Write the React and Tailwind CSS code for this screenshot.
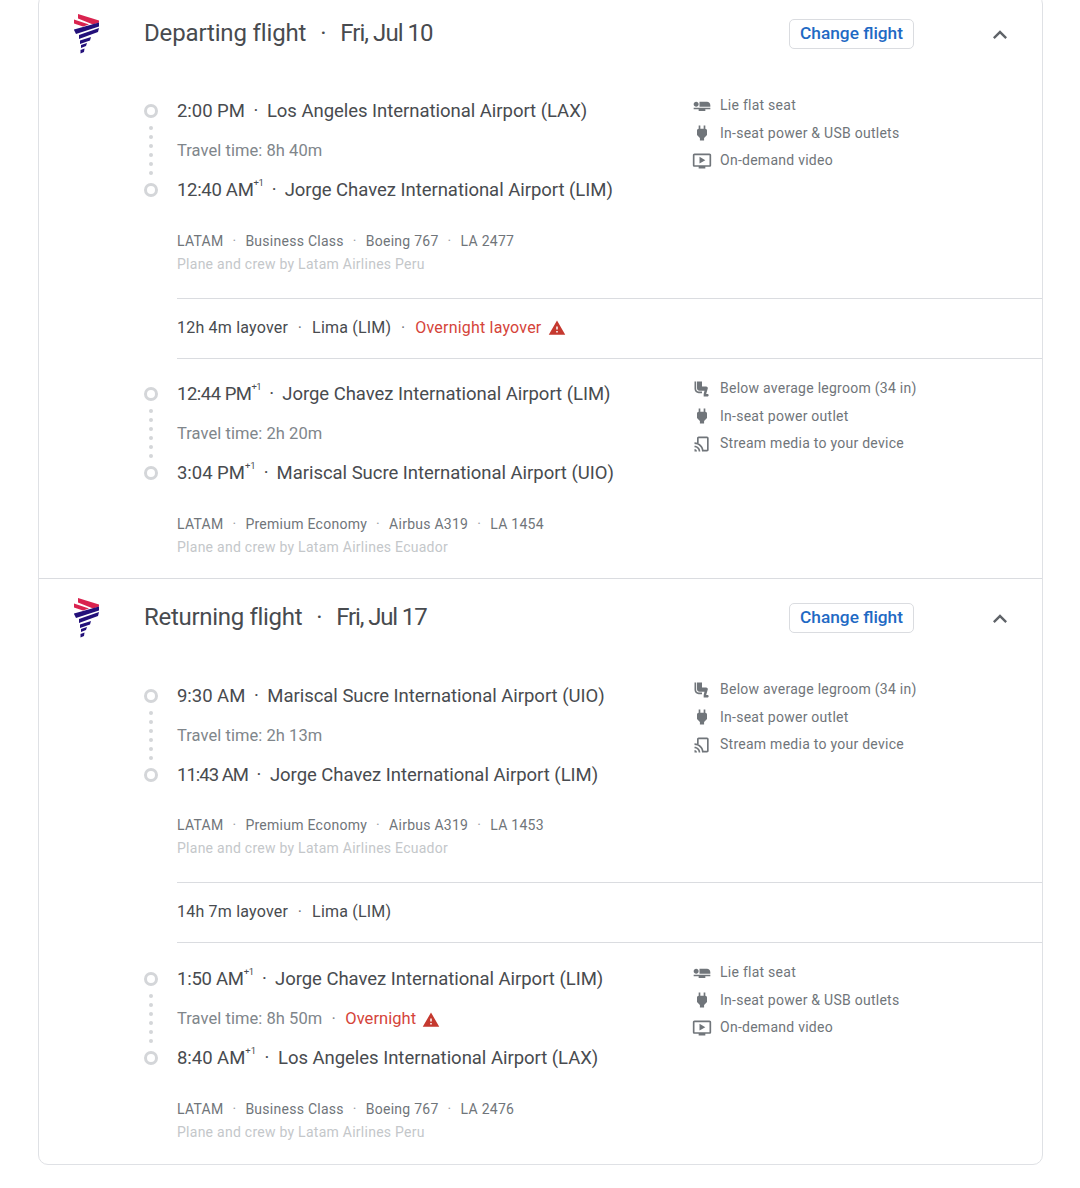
const P = {
  flat: "M22 11v2H9V7h9c2.21 0 4 1.79 4 4zM2 14v2h6v2h8v-2h6v-2H2zm5.14-1.9c1.16-1.19 1.14-3.08-.04-4.24-1.19-1.16-3.08-1.14-4.24.04-1.16 1.19-1.14 3.08.04 4.24 1.19 1.16 3.08 1.14 4.24-.04z",
  power: "M16.01 7L16 3h-2v4h-4V3H8v4h-.01C7 6.99 6 7.99 6 8.99v5.49L9.5 18v3h5v-3l3.5-3.51v-5.5c0-1-1-2-1.99-1.99z",
  video: "M21 3H3c-1.11 0-2 .89-2 2v12c0 1.1.89 2 2 2h5v2h8v-2h5c1.1 0 2-.9 2-2l.01-12c0-1.11-.9-2-2.01-2zm0 14H3V5h18v12zM16 11l-7 4V7z",
  leg: "M19.97 19.2c.18.96-.55 1.8-1.47 1.8H14v-3l1-4H9c-1.65 0-3-1.35-3-3V3h6v6h5c1.1 0 2 .9 2 2l-2 7h1.44c.73 0 1.39.49 1.53 1.2zM5 12V3H3v9c0 2.76 2.24 5 5 5h4v-2H8c-1.66 0-3-1.34-3-3z",
  cast: "M18 3H8c-1.1 0-2 .9-2 2v7h2V5h10v14h-5v2h5c1.1 0 2-.9 2-2V5c0-1.1-.9-2-2-2zM3 18v3h3c0-1.66-1.34-3-3-3zm0-4v2c2.76 0 5 2.24 5 5h2c0-3.87-3.13-7-7-7zm0-4v2c4.97 0 9 4.03 9 9h2c0-6.08-4.93-11-11-11z",
  warn: "M1 21h22L12 2 1 21zm12-3h-2v-2h2v2zm0-4h-2v-4h2v4z",
  up: "M7.41 15.41L12 10.83l4.59 4.58L18 14l-6-6-6 6z",
};

function Ic({ d, className }) {
  return (
    <svg viewBox="0 0 24 24" className={className} fill="currentColor">
      <path d={d} />
    </svg>
  );
}

function Logo() {
  return (
    <svg viewBox="0 0 26 40" className="w-[26px] h-[40px] shrink-0">
      <g fill="#d9234f">
        <polygon points="4,0 25,6.5 25,8.5 19,10.5 4,4.5" />
        <polygon points="0,5.5 15,10.5 9,12.5 0,9.5" />
      </g>
      <g fill="#23107a">
        <polygon points="25,8.5 25,12.5 2,20 0,16 0,15.5" />
        <polygon points="25,14 24,18 5,25 5,21" />
        <polygon points="17,23 16,26.5 6,30 6,26.5" />
        <polygon points="13,29 12,32 7,34 7,31" />
        <polygon points="10.5,34.5 10,38 6.5,39.5 6.5,36" />
      </g>
    </svg>
  );
}

function Rail() {
  return (
    <div className="w-[14px] mr-[19px] pt-[12px] flex flex-col items-center shrink-0">
      <div className="w-[14px] h-[14px] rounded-full border-[3px] border-[#d4d6d9]" />
      <div className="flex flex-col items-center gap-[5.2px] py-[7.5px]">
        {[0, 1, 2, 3, 4, 5].map((i) => (
          <div key={i} className="w-[4px] h-[4px] rounded-full bg-[#d4d6d9]" />
        ))}
      </div>
      <div className="w-[14px] h-[14px] rounded-full border-[3px] border-[#d4d6d9]" />
    </div>
  );
}

function Time({ time, plus, airport, sep = 22, timeClass = "" }) {
  return (
    <div className="h-10 flex items-center text-[18.5px] text-[#484b4f] tracking-[-0.03px] whitespace-nowrap">
      <span className={timeClass}>
        {time}
        {plus && <sup className="text-[9.5px] align-[5px] leading-none">+1</sup>}
      </span>
      <span className="text-center" style={{ width: sep }}>·</span>
      <span>{airport}</span>
    </div>
  );
}

function Amenity({ icon, text }) {
  return (
    <div className="flex items-center h-[27.5px]">
      <div className="w-[28px] -ml-[2px] flex items-center justify-start">
        <Ic d={icon} className="w-[20px] h-[20px] text-[#70757a]" />
      </div>
      <span>{text}</span>
    </div>
  );
}

function Segment({ a, b, travel, overnight, details, crew, amen, className, detailClass, amenClass = "" }) {
  return (
    <div className={`flex pl-[105px] ${className}`}>
      <Rail />
      <div className="w-[517px] shrink-0">
        <Time {...a} />
        <div className="h-[39px] flex items-center text-[16.5px] text-[#80868b] tracking-[0.05px]">
          <span>Travel time: {travel}</span>
          {overnight && (
            <span className="flex items-center text-[#d5443a]">
              <span className="text-[#80868b] w-[23px] text-center">·</span>
              <span>Overnight</span>
              <Ic d={P.warn} className="w-[18px] h-[18px] ml-[6px] text-[#c5392f]" />
            </span>
          )}
        </div>
        <Time {...b} />
        <div className={`h-[23px] flex items-center text-[14px] text-[#70757a] tracking-[0.26px] whitespace-nowrap ${detailClass}`}>
          {details.map((d, i) => (
            <span key={i} className="flex items-center">
              {i > 0 && <span className="w-[22px] text-center text-[#9aa0a6]">·</span>}
              {d}
            </span>
          ))}
        </div>
        <div className="h-[23px] flex items-center text-[14px] text-[#c4c7ca] tracking-[0.26px]">{crew}</div>
      </div>
      <div className={`text-[14px] text-[#70757a] tracking-[0.26px] whitespace-nowrap ${amenClass}`}>
        {amen.map((m, i) => (
          <Amenity key={i} {...m} />
        ))}
      </div>
    </div>
  );
}

function Layover({ children }) {
  return (
    <div className="ml-[138px] border-y border-[#dadce0] h-[61px] pb-[2px] flex items-center text-[16px] text-[#484b4f] tracking-[0.2px] whitespace-nowrap">
      {children}
    </div>
  );
}

function Sep() {
  return <span className="w-[24px] text-center text-[#70757a]">·</span>;
}

function Header({ title, date, titleClass, dateClass, className }) {
  return (
    <div className={`flex items-center ${className}`}>
      <div className="w-[35px] ml-[35px] self-start mt-[19px]">
        <Logo />
      </div>
      <div className="ml-[35px] text-[24px] text-[#484b4f] flex whitespace-nowrap">
        <span className={titleClass}>{title}</span>
        <span className="w-[34px] text-center">·</span>
        <span className={dateClass}>{date}</span>
      </div>
      <div className="ml-auto flex items-center">
        <button className="h-[30px] w-[125px] mt-[2px] rounded-[5px] border border-[#dadce0] text-[#1f6ac4] text-[17.3px] font-medium">
          Change flight
        </button>
        <div className="ml-[72px] mr-[28px] mt-[4px]">
          <Ic d={P.up} className="w-[28px] h-[28px] text-[#5f6368]" />
        </div>
      </div>
    </div>
  );
}

const business = [
  { icon: P.flat, text: "Lie flat seat" },
  { icon: P.power, text: "In-seat power & USB outlets" },
  { icon: P.video, text: "On-demand video" },
];
const premium = [
  { icon: P.leg, text: "Below average legroom (34 in)" },
  { icon: P.power, text: "In-seat power outlet" },
  { icon: P.cast, text: "Stream media to your device" },
];

export default function App() {
  return (
    <div className="bg-white h-[1188px] overflow-hidden" style={{ fontFamily: "Roboto, sans-serif" }}>
      <div className="mx-[38px] w-[1005px] -mt-[6px] border border-[#dfe1e5] rounded-[10px] overflow-hidden">
        <Header
          title="Departing flight"
          date="Fri, Jul 10"
          titleClass="tracking-[-0.15px]"
          dateClass="tracking-[-0.95px]"
          className="h-[97px] pb-[21px]"
        />
        <Segment
          a={{ time: "2:00 PM", airport: "Los Angeles International Airport (LAX)" }}
          b={{ time: "12:40 AM", plus: true, airport: "Jorge Chavez International Airport (LIM)", sep: 21, timeClass: "tracking-[-0.3px]" }}
          travel="8h 40m"
          details={["LATAM", "Business Class", "Boeing 767", "LA 2477"]}
          crew="Plane and crew by Latam Airlines Peru"
          amen={business}
          className="pb-[22px]"
          detailClass="mt-[19px]"
        />
        <Layover>
          <span>12h 4m layover</span>
          <Sep />
          <span>Lima (LIM)</span>
          <Sep />
          <span className="text-[#d5443a]">Overnight layover</span>
          <Ic d={P.warn} className="w-[18px] h-[18px] ml-[7px] text-[#c5392f]" />
        </Layover>
        <div className="h-[16px]" />
        <Segment
          a={{ time: "12:44 PM", plus: true, airport: "Jorge Chavez International Airport (LIM)", sep: 21, timeClass: "tracking-[-0.5px]" }}
          b={{ time: "3:04 PM", plus: true, airport: "Mariscal Sucre International Airport (UIO)", sep: 21 }}
          travel="2h 20m"
          details={["LATAM", "Premium Economy", "Airbus A319", "LA 1454"]}
          crew="Plane and crew by Latam Airlines Ecuador"
          amen={premium}
          className="pb-[19px]"
          detailClass="mt-[19px]"
        />
        <div className="border-t border-[#dadce0]" />
        <Header
          title="Returning flight"
          date="Fri, Jul 17"
          titleClass="tracking-[-0.3px]"
          dateClass="tracking-[-1.15px]"
          className="h-[98px] pb-[22px]"
        />
        <Segment
          a={{ time: "9:30 AM", airport: "Mariscal Sucre International Airport (UIO)" }}
          b={{ time: "11:43 AM", airport: "Jorge Chavez International Airport (LIM)", timeClass: "tracking-[-1px]" }}
          travel="2h 13m"
          details={["LATAM", "Premium Economy", "Airbus A319", "LA 1453"]}
          crew="Plane and crew by Latam Airlines Ecuador"
          amen={premium}
          className="pb-[22px]"
          detailClass="mt-[18px]"
          amenClass="-mt-[1px]"
        />
        <Layover>
          <span>14h 7m layover</span>
          <Sep />
          <span>Lima (LIM)</span>
        </Layover>
        <div className="h-[17px]" />
        <Segment
          a={{ time: "1:50 AM", plus: true, airport: "Jorge Chavez International Airport (LIM)", sep: 21, timeClass: "tracking-[-0.25px]" }}
          b={{ time: "8:40 AM", plus: true, airport: "Los Angeles International Airport (LAX)" }}
          travel="8h 50m"
          overnight
          details={["LATAM", "Business Class", "Boeing 767", "LA 2476"]}
          crew="Plane and crew by Latam Airlines Peru"
          amen={business}
          className="pb-[20px]"
          detailClass="mt-[19px]"
          amenClass="-mt-[1px]"
        />
      </div>
    </div>
  );
}
